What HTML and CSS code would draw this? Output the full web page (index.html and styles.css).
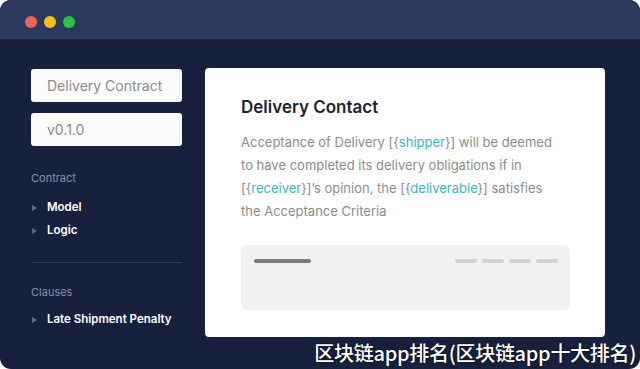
FILE: index.html
```html
<!DOCTYPE html>
<html>
<head>
<meta charset="utf-8">
<link rel="stylesheet" href="styles.css">
</head>
<body>
<div class="window">
  <div class="titlebar">
    <span class="dot red"></span>
    <span class="dot yellow"></span>
    <span class="dot green"></span>
  </div>
  <div class="content">
    <aside class="sidebar">
      <div class="field">Delivery Contract</div>
      <div class="field">v0.1.0</div>
      <div class="section-label first">Contract</div>
      <div class="item"><span class="tri"></span>Model</div>
      <div class="item"><span class="tri"></span>Logic</div>
      <div class="divider"></div>
      <div class="section-label second">Clauses</div>
      <div class="item"><span class="tri"></span>Late Shipment Penalty</div>
    </aside>
    <main class="card">
      <h1 class="card-title">Delivery Contact</h1>
      <p class="clause">Acceptance of Delivery [{<span class="var">shipper</span>}] will be deemed to have completed its delivery obligations if in [{<span class="var">receiver</span>}]’s opinion, the [{<span class="var">deliverable</span>}] satisfies the Acceptance Criteria</p>
      <div class="editor">
        <span class="bar dark"></span>
        <span class="bars">
          <span class="bar light"></span>
          <span class="bar light"></span>
          <span class="bar light"></span>
          <span class="bar light"></span>
        </span>
      </div>
    </main>
  </div>
  <div class="caption">区块链app排名(区块链app十大排名)</div>
</div>
</body>
</html>
```
FILE: styles.css
```css
html, body {
  margin: 0;
  padding: 0;
  background: #ffffff;
}
.window {
  position: relative;
  width: 640px;
  height: 369px;
  border-radius: 11px;
  overflow: hidden;
  background: #17213e;
  font-family: Inter, "Noto Sans", sans-serif;
  display: flex;
  flex-direction: column;
}
.titlebar {
  height: 39px;
  background: #2c3a5f;
  display: flex;
  align-items: center;
  gap: 7px;
  padding-left: 25px;
  box-sizing: border-box;
  flex: none;
}
.dot {
  width: 12px;
  height: 12px;
  border-radius: 50%;
  display: block;
  margin-top: 4px;
}
.red { background: #f25f5c; }
.yellow { background: #f6be1e; }
.green { background: #27c840; }
.content {
  display: flex;
  padding: 29px 35px 0 31px;
  gap: 23px;
  align-items: flex-start;
}
.sidebar {
  width: 151px;
  flex: none;
  display: flex;
  flex-direction: column;
}
.field {
  height: 33px;
  margin-top: 1px;
  margin-bottom: 10px;
  background: #fbfbfc;
  border-radius: 3px;
  color: #8c8c8c;
  font-size: 14px;
  line-height: 33px;
  padding-left: 16px;
}
.section-label {
  color: #8890a6;
  font-size: 11px;
  line-height: 14px;
  margin-top: 22px;
  margin-bottom: 11px;
}
.section-label.first { margin-top: 15px; }
.section-label.second { margin-bottom: 9px; }
.item {
  color: #ffffff;
  font-size: 11.5px;
  font-weight: 600;
  line-height: 23px;
  display: flex;
  align-items: center;
}
.tri {
  width: 0;
  height: 0;
  border-top: 3.5px solid transparent;
  border-bottom: 3.5px solid transparent;
  border-left: 5px solid #5d6887;
  margin-left: 1px;
  margin-right: 10px;
}
.divider {
  height: 1px;
  background: #323e5e;
  margin-top: 20px;
}
.card {
  flex: 1;
  height: 269px;
  background: #ffffff;
  border-radius: 4px;
  padding: 28px 35px 0 36px;
  box-sizing: border-box;
}
.card-title {
  margin: 0;
  font-size: 17px;
  font-weight: 600;
  color: #1e2334;
  line-height: 22px;
}
.clause {
  margin: 13px 0 0 0;
  font-size: 13px;
  line-height: 23px;
  color: #8c8c8c;
  width: 316px;
}
.var { color: #3ab5c6; }
.editor {
  margin-top: 22px;
  height: 65px;
  background: #f1f1f1;
  border-radius: 6px;
  display: flex;
  justify-content: space-between;
  align-items: flex-start;
  padding: 14px 12px 0 13px;
  box-sizing: border-box;
}
.bar {
  display: block;
  height: 4px;
  border-radius: 2px;
}
.bar.dark { width: 57px; background: #7a7a7a; }
.bars { display: flex; gap: 5px; }
.bar.light { width: 22px; background: #d2d2d2; }
.caption {
  position: absolute;
  right: 4px;
  bottom: 3px;
  color: #ffffff;
  font-family: "Noto Sans CJK SC", sans-serif;
  font-size: 20px;
  font-weight: 500;
  line-height: 26px;
  letter-spacing: -0.3px;
  text-shadow: 0 0 2px #000;
}
```
